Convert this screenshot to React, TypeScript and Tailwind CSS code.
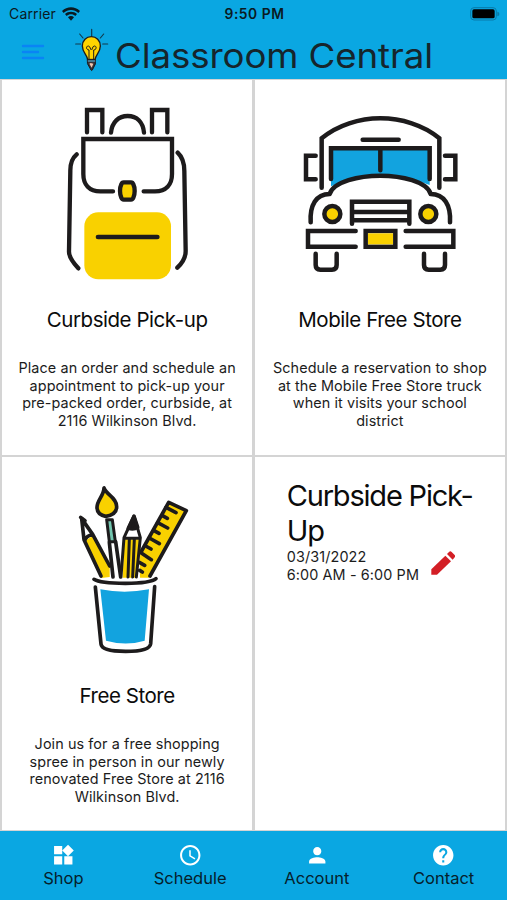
import type { ReactNode } from "react";
import { MdAccessTime, MdHelp, MdPerson, MdWidgets } from "react-icons/md";

const INK = "#1d1b1c";
const YELLOW = "#f9d100";
const BLUE = "#12a3df";

const tabs = [
  { label: "Shop", icon: MdWidgets },
  { label: "Schedule", icon: MdAccessTime },
  { label: "Account", icon: MdPerson },
  { label: "Contact", icon: MdHelp },
];

function WifiIcon() {
  return (
    <svg viewBox="0 0 54 42" className="ml-[6px] h-[14px] w-[18px]" fill="#0a1a22">
      <path d="M27 1C17 1 8 5 0 12l5 6c6-6 14-9 22-9s16 3 22 9l5-6C46 5 37 1 27 1Z" />
      <path d="M27 14c-7 0-13 2.500-18 7l5 6c4-3 8-5 13-5s9 2 13 5l5-6c-5-4.500-11-7-18-7Z" />
      <path d="M27 27c-3.500 0-6.500 1.300-9 3.500L27 41l9-10.500c-2.500-2.200-5.500-3.500-9-3.500Z" />
    </svg>
  );
}

function BatteryIcon() {
  return (
    <svg viewBox="0 0 90 42" className="h-[14px] w-[30px]">
      <rect x="2" y="2" width="77" height="37" rx="10" fill="none" stroke="#087ba9" strokeWidth="3" />
      <rect x="7" y="7" width="67" height="27" rx="5" fill="#000" />
      <path d="M82 14c4 1 6 3 6 7s-2 6-6 7Z" fill="#087ba9" />
    </svg>
  );
}

function PencilIcon() {
  return (
    <svg viewBox="0 0 72 72" className="mb-[5px] ml-[12px] size-[24px]" fill="#d31f26">
      <path d="M1 71V55l42-41 17 17-42 40Z" />
      <path d="m48 9 6-6q4-4 8 0l9 9q3 4 0 7l-6 7Z" />
    </svg>
  );
}

function BulbIcon() {
  return (
    <svg viewBox="222 84 104 132" className="h-[44px] w-[34.700px]" fill="none" stroke={INK} strokeLinecap="round">
      <path d="M275 88v20M239 102l10 12M311 102l-10 12M227 132h15M308 132h15" strokeWidth="3.500" stroke="#12394a" />
      <path d="M263 179c-1-14-16-22-16-41 0-16 12-28 27-28s27 12 27 28c0 19-15 27-16 41Z" fill="#ffd400" strokeWidth="4" />
      <path d="M267 177v-27c-9 0-10-12-2-12 6 0 6 12 9 12s3-12 9-12c8 0 7 12-2 12v27" strokeWidth="3" />
      <path d="M263 178h23v14l-9 18q-2 3-4 0l-10-18Z" fill="#363338" strokeWidth="3" />
      <path d="M265 183h19" stroke="#4d91ad" strokeWidth="4" />
      <path d="m268 191 4-2 8 2-5 12Z" fill="#f4c6ae" stroke="none" />
    </svg>
  );
}

function BackpackArt() {
  return (
    <svg viewBox="0 0 435 585" className="h-[195px] w-[145px]" fill="none" stroke={INK} strokeWidth="13" strokeLinecap="round">
      <rect x="88" y="352" width="260" height="201" rx="42" fill={YELLOW} stroke="none" />
      <path d="M129 426h178" strokeWidth="14" />
      <path d="M96 112V45h46v67M291 112V45h46v67M168 113c3-32 23-50 50-50s46 18 49 50" />
      <path d="M174 289h-38c-33 0-51-20-51-52V132h266v105c0 32-18 52-51 52h-34" />
      <path d="M206 262h22q5 0 7 6 4 8 4 20t-4 20q-2 6-7 6h-22q-5 0-7-6-4-8-4-20t4-20q2-6 7-6Z" fill={YELLOW} strokeLinejoin="round" />
      <path d="M65 178c-12 10-19 26-19 48l-4 244c0 18 16 37 28 50M368 173c14 13 20 32 20 55l4 240c0 22-12 38-25 50" />
    </svg>
  );
}

function BusArt() {
  return (
    <svg viewBox="0 0 510 540" className="h-[180px] w-[170px]" fill="none" stroke={INK} strokeWidth="13.500" strokeLinecap="round">
      <path d="M108 130h296v110q-64-27-148-28-82 0-148 32Z" fill={BLUE} stroke="none" />
      <path d="M80 248V100c48-40 114-60 176-60s130 20 177 60v148" />
      <path d="M203 104h108M108 222v-92h296v92M256 132v64" />
      <path d="M62 152H33v71h29M450 152h31v71h-31" />
      <path
        d="M47 352c-3-51 16-85 57-85 12-37 89-55 152-55s140 18 151 55c41 0 61 34 58 85"
        fill="none"
        strokeLinejoin="round"
      />
      <circle cx="112" cy="327" r="24" fill={YELLOW} />
      <circle cx="400" cy="327" r="24" fill={YELLOW} />
      <path d="M171 356v-66h172v66M172 321h170M172 346h170" />
      <path d="M182 378H39v47h143M332 378h143v47H332M212 378h89v47h-89Z" />
      <rect x="219" y="385" width="75" height="33" fill={YELLOW} stroke="none" />
      <path d="M62 446v34q0 14 14 14h35q14 0 14-14v-34M387 446v34q0 14 14 14h35q14 0 14-14v-34" />
    </svg>
  );
}

function SuppliesArt() {
  return (
    <svg viewBox="0 0 405 570" className="h-[190px] w-[135px]" fill="none" stroke={INK} strokeWidth="11" strokeLinecap="round" strokeLinejoin="round">
      {/* ruler */}
      <path d="M224 243 311 82l52 24-110 202h-28Z" fill={YELLOW} stroke="none" />
      <path d="M228 231 311 82l53 25-109 196" />
      <path d="m303 97 30 16M291 121l16 9M278 143l30 16M266 166l16 9M253 189l30 17M242 213l16 9M230 235l29 19M223 262l16 9M224 286l8 5" />
      {/* slim pencil */}
      <path d="m60 198 27-18 47 94v32l-25 3Z" fill={YELLOW} stroke="none" />
      <path d="m50 131 7 63 51 109M50 131l33 47 51 95M59 197q7-18 24-17" />
      <path d="m47 127 13 10" strokeWidth="11" />
      {/* brush */}
      <path d="M117 39c0 22-21 37-21 58 0 16 11 24 26 27 21-3 33-13 33-29 0-27-29-34-38-56Z" fill={YELLOW} />
      <path d="M125 134h17l9 66h-18Z" fill="#73c7b0" strokeWidth="9" />
      <path d="m133 202 11 104M152 200l15 106" />
      {/* wide pencil */}
      <path d="m178 188 29-65 19 65-10 119h-46Z" fill="#fff" stroke="none" />
      <path d="M178 193h47l-12 115h-40Z" fill={YELLOW} stroke="none" />
      <path d="m168 305 9-117 30-65 19 65-12 118M177 190h49M193 193l-4 113M208 193l-5 113" strokeWidth="9" />
      <path d="m207 124-17 36q17 5 28-3Z" fill={INK} />
      {/* cup */}
      <path d="M87 313q18 12 94 12 76 0 92-14" />
      <path d="m91 336 17 171q2 22 74 22t75-23l12-171" strokeWidth="11" />
      <path d="M106 343q72 14 146 0l-13 154q-56 17-116 0Z" fill={BLUE} stroke="none" />
    </svg>
  );
}

type StoreCardProps = {
  title: string;
  lines: string[];
  artClass?: string;
  children: ReactNode;
};

function StoreCard({ title, lines, artClass = "h-[224px]", children }: StoreCardProps) {
  return (
    <section className="flex flex-col items-center bg-white">
      <div className={`flex w-full justify-center ${artClass}`}>{children}</div>
      <h2 className="text-[20.500px] leading-[32px] tracking-[-0.450px] whitespace-nowrap">{title}</h2>
      <p className="mt-[23px] text-center text-[14.400px] leading-[17.500px] tracking-[0.090px] text-[#1c1c1c]">
        {lines.map((line) => (
          <span key={line} className="block whitespace-nowrap">
            {line}
          </span>
        ))}
      </p>
    </section>
  );
}

export default function App() {
  return (
    <div className="flex h-[900px] w-[507px] flex-col overflow-hidden bg-[#0aa7e2] font-['Inter',sans-serif] text-[#0b0b0b]">
      <header className="h-[79px] shrink-0">
        <div className="grid h-[27px] grid-cols-3 items-center pr-[7px] pl-[9px] text-[#0a1a22]">
          <div className="flex items-center">
            <span className="text-[14px] tracking-[0.150px]">Carrier</span>
            <WifiIcon />
          </div>
          <span className="pt-px text-center text-[13.800px] font-semibold tracking-[0.550px]">9:50 PM</span>
          <div className="flex justify-end">
            <BatteryIcon />
          </div>
        </div>
        <div className="flex h-[52px] items-start pl-[21px]">
          <svg viewBox="0 0 24 18" className="mt-[16px] h-[18px] w-[24px]" stroke="#0a84f5" strokeWidth="2.400" strokeLinecap="round">
            <path d="M2 3h20M2 9h15M2 15h20" />
          </svg>
          <div className="mt-[1px] ml-[29px]">
            <BulbIcon />
          </div>
          <h1 className="mt-[7.500px] ml-[6.500px] origin-left scale-x-[1.095] text-[33.500px] leading-[42px] font-normal tracking-[-0.100px] whitespace-nowrap text-[#16252c]">
            Classroom Central
          </h1>
        </div>
      </header>

      <main className="grid h-[752px] shrink-0 grid-cols-2 grid-rows-[374.500px_373px] gap-x-[2.500px] gap-y-[2.500px] bg-[#d4d4d4] px-[2px] py-px">
        <StoreCard
          title="Curbside Pick-up"
          lines={[
            "Place an order and schedule an",
            "appointment to pick-up your",
            "pre-packed order, curbside, at",
            "2116 Wilkinson Blvd.",
          ]}
        >
          <div className="mt-[15px]">
            <BackpackArt />
          </div>
        </StoreCard>
        <StoreCard
          title="Mobile Free Store"
          lines={[
            "Schedule a reservation to shop",
            "at the Mobile Free Store truck",
            "when it visits your school",
            "district",
          ]}
        >
          <div className="mt-[25px]">
            <BusArt />
          </div>
        </StoreCard>
        <StoreCard
          title="Free Store"
          artClass="h-[223px]"
          lines={[
            "Join us for a free shopping",
            "spree in person in our newly",
            "renovated Free Store at 2116",
            "Wilkinson Blvd.",
          ]}
        >
          <div className="mt-[18px] mr-[-10px]">
            <SuppliesArt />
          </div>
        </StoreCard>
        <section className="bg-white pt-[21px] pl-[32px]">
          <h2 className="text-[29px] leading-[35px] tracking-[-1.200px]">
            Curbside Pick-
            <br />
            Up
          </h2>
          <div className="flex items-center">
            <p className="text-[14.400px] leading-[17.500px] tracking-[0.110px] whitespace-nowrap text-[#1c1c1c]">
              03/31/2022
              <br />
              6:00 AM - 6:00 PM
            </p>
            <PencilIcon />
          </div>
        </section>
      </main>

      <nav className="grid flex-1 grid-cols-4">
        {tabs.map(({ label, icon: Icon }) => (
          <a key={label} className="flex flex-col items-center pt-[12px] text-[16.500px] leading-[21px] text-[#06202b]">
            <Icon className="size-[24.500px] text-white" />
            {label}
          </a>
        ))}
      </nav>
    </div>
  );
}
